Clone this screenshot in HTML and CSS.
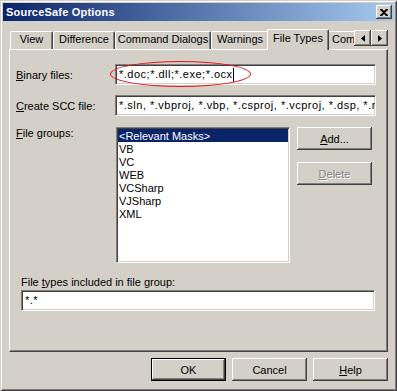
FILE: index.html
```html
<!DOCTYPE html>
<html lang="en">
<head>
    <meta charset="UTF-8">
    <title>SourceSafe Options</title>
    <link rel="stylesheet" href="styles.css">
</head>
<body>
    <div class="window">
        <div class="titlebar">
            <span class="title">SourceSafe Options</span>
            <span class="close">
                <svg width="8" height="7" viewBox="0 0 8 7"><path d="M0 0h2l2 2 2-2h2v1L5 3.5 8 6v1H6L4 5 2 7H0V6l3-2.5L0 1z" fill="#000"/></svg>
            </span>
        </div>

        <div class="tabstrip">
            <div class="tabs">
                <div class="tab w-view">View</div>
                <div class="tab w-diff">Difference</div>
                <div class="tab w-cmd">Command Dialogs</div>
                <div class="tab w-warn">Warnings</div>
                <div class="tab active">File Types</div>
                <div class="tab w-com">Command Line Options</div>
            </div>
            <div class="scroller">
                <span class="arrow"><svg width="4" height="7" viewBox="0 0 4 7"><path d="M4 0v7L0 3.5z" fill="#000"/></svg></span>
                <span class="arrow"><svg width="4" height="7" viewBox="0 0 4 7"><path d="M0 0v7l4-3.5z" fill="#000"/></svg></span>
            </div>
        </div>

        <div class="panel">
            <div class="row">
                <label class="label"><u>B</u>inary files:</label>
                <div class="field marked">
                    <span>*.doc;*.dll;*.exe;*.ocx</span><span class="caret"></span>
                    <span class="ring"></span>
                </div>
            </div>

            <div class="row">
                <label class="label"><u>C</u>reate SCC file:</label>
                <div class="field">*.sln, *.vbproj, *.vbp, *.csproj, *.vcproj, *.dsp, *.mak, *.vdproj</div>
            </div>

            <div class="row groups">
                <label class="label"><u>F</u>ile groups:</label>
                <div class="listbox">
                    <div class="item selected">&lt;Relevant Masks&gt;</div>
                    <div class="item">VB</div>
                    <div class="item">VC</div>
                    <div class="item">WEB</div>
                    <div class="item">VCSharp</div>
                    <div class="item">VJSharp</div>
                    <div class="item">XML</div>
                </div>
                <div class="side">
                    <button class="btn"><u>A</u>dd...</button>
                    <button class="btn" disabled><u>D</u>elete</button>
                </div>
            </div>

            <div class="included">
                <label class="label">File <u>t</u>ypes included in file group:</label>
                <div class="field wide">*.*</div>
            </div>
        </div>

        <div class="actions">
            <button class="btn default">OK</button>
            <button class="btn">Cancel</button>
            <button class="btn"><u>H</u>elp</button>
        </div>
    </div>
</body>
</html>
```

FILE: styles.css
```css
body {
    margin: 0;
    background-color: #d4d0c8;
    font-family: "Liberation Sans", Arial, sans-serif;
    font-size: 11px;
    color: #000;
}
u {
    text-decoration: underline;
    text-underline-offset: 1px;
}
.window {
    width: 397px;
    height: 391px;
    box-sizing: border-box;
    padding: 3px;
    background-color: #d4d0c8;
    box-shadow: inset 1px 1px 0 #d4d0c8, inset -1px -1px 0 #404040,
                inset 2px 2px 0 #fff, inset -2px -2px 0 #808080;
}
.titlebar {
    height: 18px;
    display: flex;
    align-items: center;
    justify-content: space-between;
    padding: 0 2px 0 3px;
    background: linear-gradient(to right, #0a246a, #a6caf0);
}
.title {
    color: #fff;
    font-weight: bold;
    font-size: 11px;
    letter-spacing: 0.2px;
}
.close {
    width: 16px;
    height: 14px;
    box-sizing: border-box;
    display: flex;
    align-items: center;
    justify-content: center;
    background-color: #d4d0c8;
    box-shadow: inset -1px -1px 0 #404040, inset 1px 1px 0 #fff, inset -2px -2px 0 #808080;
}

/* tabs */
.tabstrip {
    display: flex;
    margin: 8px 6px 0 6px;
    height: 20px;
    position: relative;
    z-index: 1;
}
.tabs {
    display: flex;
    align-items: flex-end;
    width: 345px;
    height: 21px;
    overflow: hidden;
    padding-left: 1px;
    box-sizing: border-box;
}
.tab {
    flex: none;
    height: 18px;
    box-sizing: border-box;
    border-top: 1px solid #fff;
    border-left: 1px solid #fff;
    border-right: 1px solid #404040;
    border-radius: 2px 2px 0 0;
    box-shadow: inset -1px 0 0 #808080;
    text-align: center;
    line-height: 15px;
    margin-bottom: 1px;
    white-space: nowrap;
    overflow: hidden;
}
.w-view { width: 43px; }
.w-diff { width: 62px; }
.w-cmd { width: 96px; }
.w-warn { width: 58px; }
.w-com { width: 90px; text-align: left; padding-left: 4px; }
.tab.active {
    width: 62px;
    height: 21px;
    margin: 0 -2px;
    position: relative;
    z-index: 2;
    background-color: #d4d0c8;
    line-height: 16px;
    margin-bottom: 0;
}
.scroller {
    display: flex;
    margin-top: 1px;
}
.arrow {
    width: 17px;
    height: 16px;
    box-sizing: border-box;
    display: flex;
    align-items: center;
    justify-content: center;
    background-color: #d4d0c8;
    box-shadow: inset -1px -1px 0 #404040, inset 1px 1px 0 #fff, inset -2px -2px 0 #808080;
}

/* page */
.panel {
    margin: 0 6px;
    height: 303px;
    box-sizing: border-box;
    border-top: 1px solid #fff;
    border-left: 1px solid #fff;
    border-right: 1px solid #404040;
    border-bottom: 1px solid #404040;
    box-shadow: inset -1px -1px 0 #808080;
    padding: 14px 11px 0 6px;
}
.row {
    display: flex;
    align-items: center;
    margin-bottom: 10px;
}
.row.groups {
    align-items: flex-start;
    margin-top: 11px;
}
.label {
    width: 99px;
    flex: none;
    white-space: nowrap;
}
.field {
    flex: 1;
    height: 21px;
    box-sizing: border-box;
    background-color: #fff;
    border-top: 1px solid #808080;
    border-left: 1px solid #808080;
    border-right: 1px solid #fff;
    border-bottom: 1px solid #fff;
    box-shadow: inset 1px 1px 0 #404040, inset -1px -1px 0 #d4d0c8;
    padding: 0 3px;
    line-height: 19px;
    letter-spacing: 0.5px;
    white-space: nowrap;
    overflow: hidden;
}
.field.marked {
    position: relative;
    overflow: visible;
    display: flex;
    align-items: center;
}
.caret {
    display: inline-block;
    width: 1px;
    height: 14px;
    background-color: #000;
}
.ring {
    position: absolute;
    left: -6px;
    top: -4px;
    width: 141px;
    height: 26px;
    box-sizing: border-box;
    border: 1px solid #e8141c;
    border-radius: 50%;
}
.groups .label {
    line-height: 13px;
}
.listbox {
    width: 174px;
    height: 136px;
    margin-left: 1px;
    flex: none;
    box-sizing: border-box;
    background-color: #fff;
    border-top: 1px solid #808080;
    border-left: 1px solid #808080;
    border-right: 1px solid #fff;
    border-bottom: 1px solid #fff;
    box-shadow: inset 1px 1px 0 #404040, inset -1px -1px 0 #d4d0c8;
    padding: 1px 1px;
}
.item {
    height: 13px;
    line-height: 14px;
    padding-left: 1px;
}
.item.selected {
    background-color: #0a246a;
    color: #fff;
}
.side {
    display: flex;
    flex-direction: column;
    gap: 12px;
    margin-left: 7px;
}
.btn {
    width: 75px;
    height: 23px;
    padding: 0;
    font-family: "Liberation Sans", Arial, sans-serif;
    font-size: 11px;
    color: #000;
    background-color: #d4d0c8;
    border: none;
    box-shadow: inset -1px -1px 0 #404040, inset 1px 1px 0 #fff, inset -2px -2px 0 #808080;
}
.btn:disabled {
    color: #808080;
    text-shadow: 1px 1px 0 #fff;
}
.btn.default {
    box-shadow: inset 0 0 0 1px #000, inset -2px -2px 0 #404040, inset 2px 2px 0 #fff, inset -3px -3px 0 #808080;
}
.included {
    margin: 13px 0 0 5px;
}
.included .label {
    display: block;
    width: auto;
    line-height: 13px;
    margin-bottom: 1px;
}
.field.wide {
    flex: none;
    width: 354px;
}
.actions {
    display: flex;
    justify-content: flex-end;
    gap: 6px;
    margin: 6px 6px 0 0;
}
```
